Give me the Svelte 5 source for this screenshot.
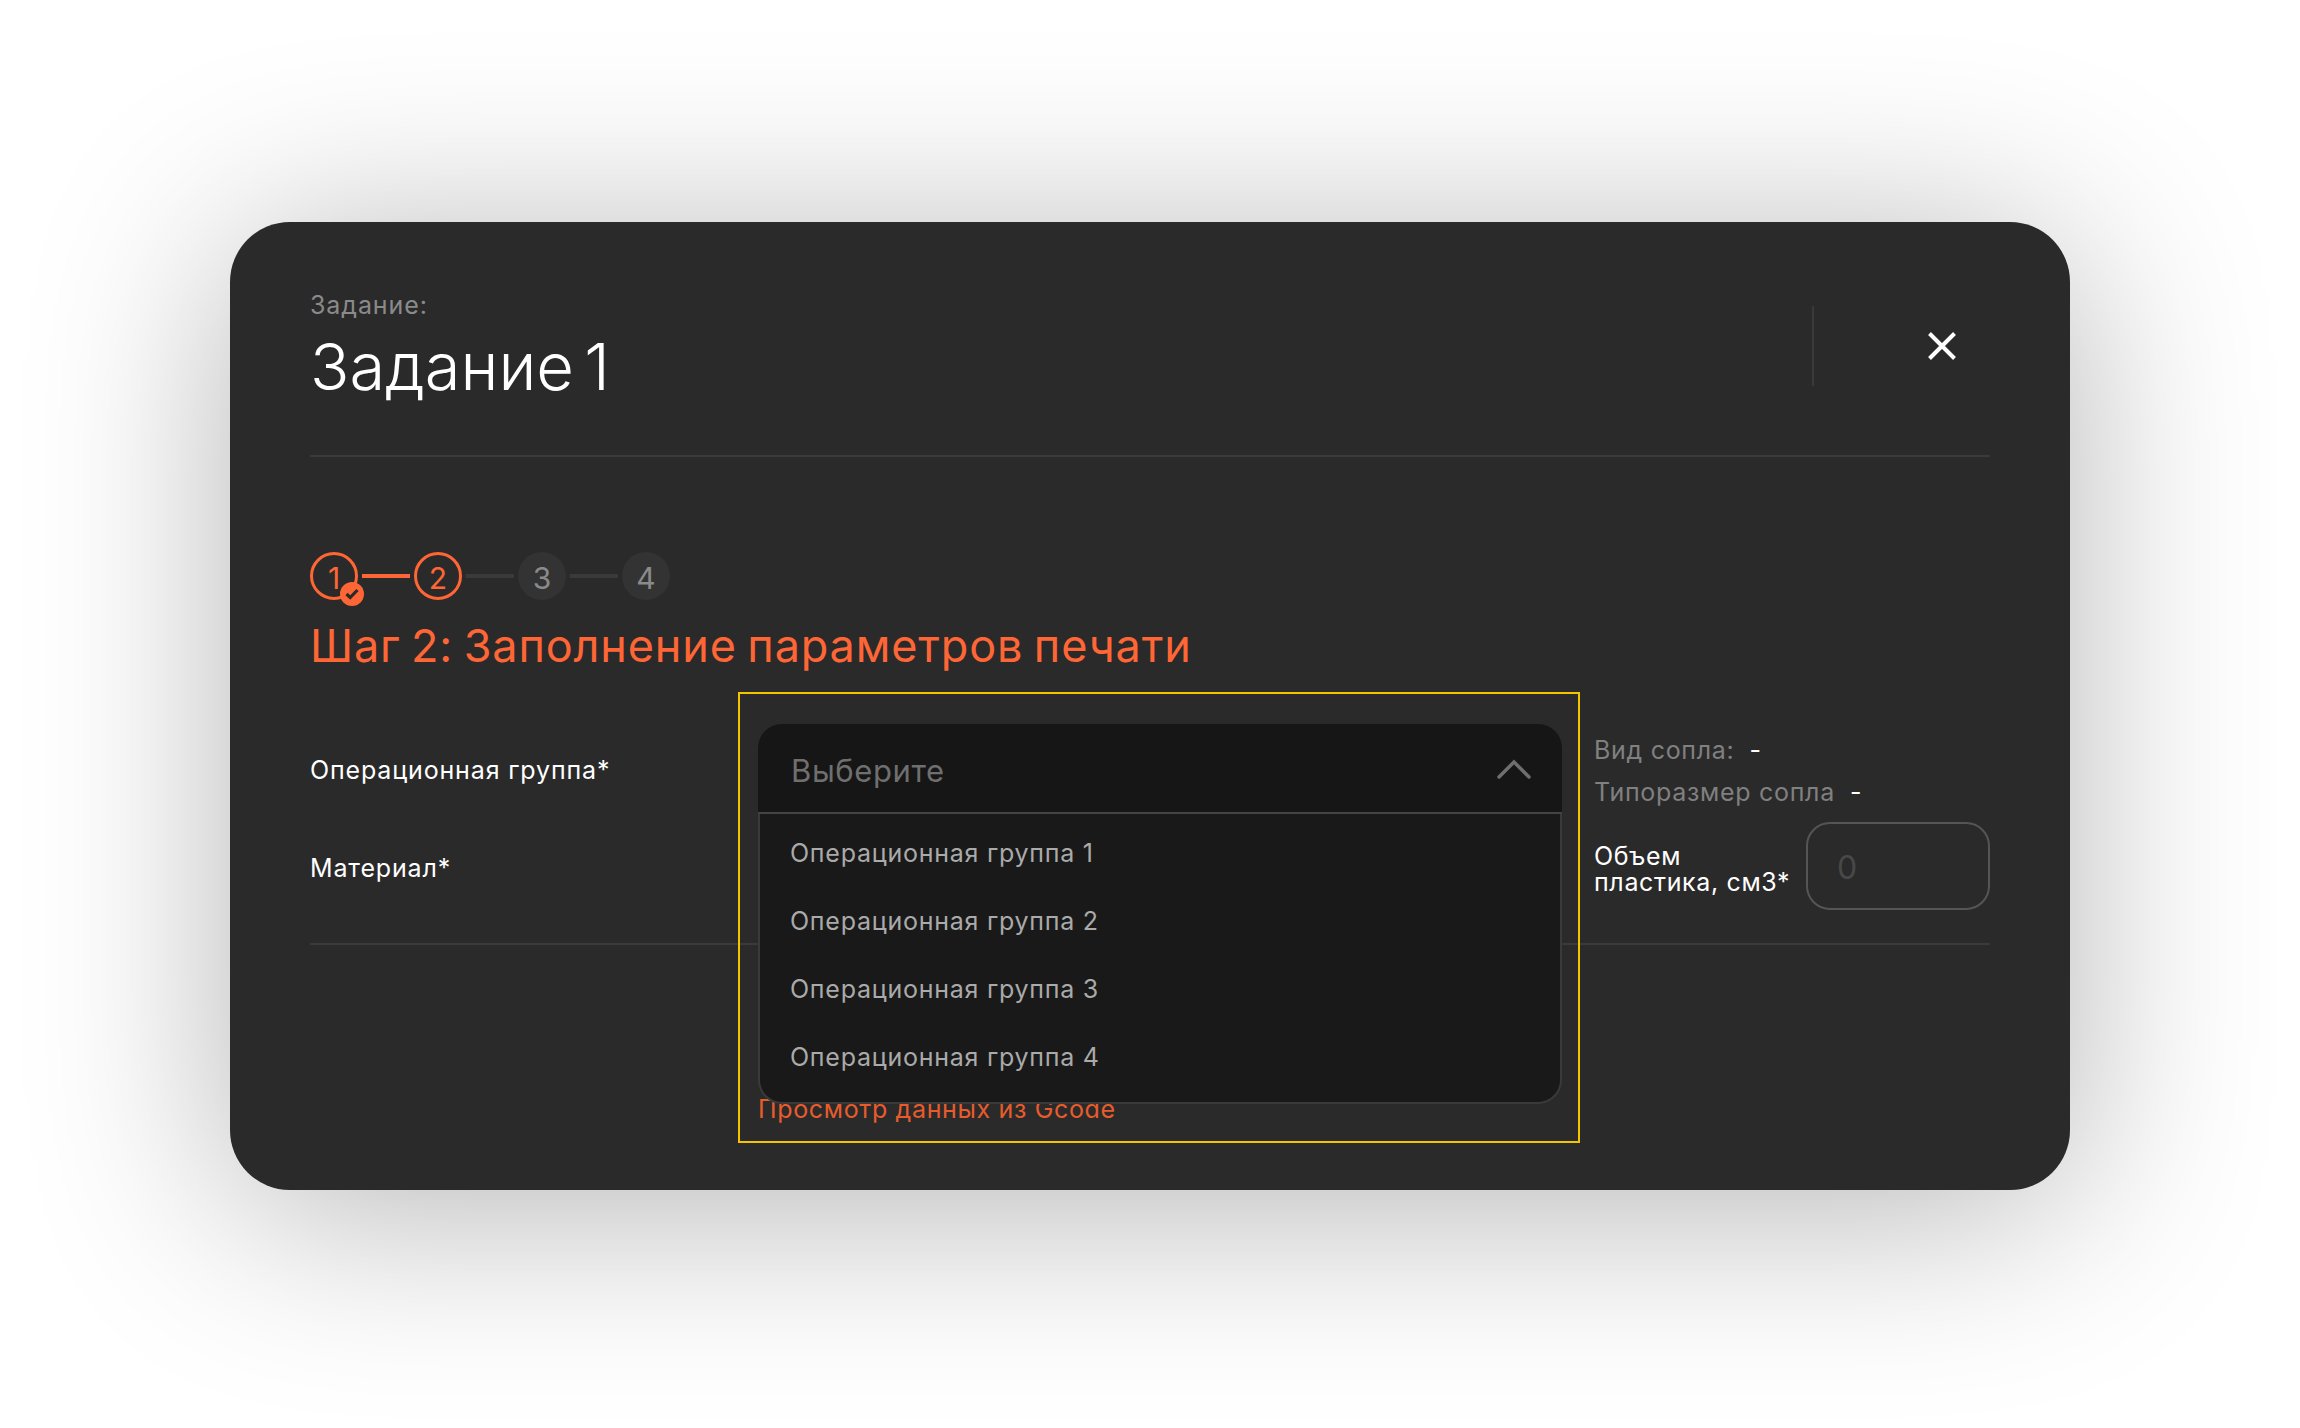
<script>
  const steps = [
    { n: 1, state: 'done' },
    { n: 2, state: 'active' },
    { n: 3, state: 'idle' },
    { n: 4, state: 'idle' }
  ];
  const groups = ['Операционная группа 1', 'Операционная группа 2', 'Операционная группа 3', 'Операционная группа 4'];
</script>

<div class="page">
  <section class="card">
    <header class="head">
      <div class="title-block">
        <div class="eyebrow">Задание:</div>
        <h1>Задание 1</h1>
      </div>
      <div class="close-wrap">
        <svg class="close" width="28" height="28" viewBox="0 0 28 28" aria-label="Закрыть">
          <path d="M1.5 1.5 26.5 26.5M26.5 1.5 1.5 26.5" fill="none" stroke="#fff" stroke-width="4" />
        </svg>
      </div>
    </header>

    <div class="stepper">
      {#each steps as s, i}
        {#if i > 0}
          <span class="link" class:on={s.state !== 'idle'}></span>
        {/if}
        <span class="step {s.state}">
          {s.n}
          {#if s.state === 'done'}
            <span class="badge">
              <svg width="14" height="12" viewBox="0 0 14 12">
                <path d="M1.5 6 5.2 9.5 12.5 2" fill="none" stroke="#2a2a2a" stroke-width="3.2" />
              </svg>
            </span>
          {/if}
        </span>
      {/each}
    </div>

    <h2>Шаг 2: Заполнение параметров печати</h2>

    <div class="form">
      <div class="labels">
        <div class="label">Операционная группа*</div>
        <div class="label">Материал*</div>
      </div>

      <div class="center">
        <div class="frame"></div>
        <div class="select">
          <div class="select-head">
            <span class="placeholder">Выберите</span>
            <svg width="34" height="20" viewBox="0 0 34 20">
              <path d="M2 18 17 3 32 18" fill="none" stroke="#6f6f6f" stroke-width="3.4" stroke-linecap="round" />
            </svg>
          </div>
          <ul class="options">
            {#each groups as g}
              <li>{g}</li>
            {/each}
          </ul>
        </div>
      </div>

      <div class="side">
        <div class="meta"><span class="key">Вид сопла:</span><span class="val">-</span></div>
        <div class="meta"><span class="key">Типоразмер сопла</span><span class="val">-</span></div>
        <div class="volume">
          <div class="vol-label">Объем<br />пластика, см3*</div>
          <div class="vol-input">0</div>
        </div>
      </div>
    </div>

    <div class="foot">
      <span class="gcode">Просмотр данных из Gcode</span>
    </div>
  </section>
</div>

<style>
  :global(body) {
    margin: 0;
    background: #fff;
  }
  .page {
    width: 2300px;
    height: 1428px;
    padding: 222px 230px 0;
    box-sizing: border-box;
    font-family: Inter, 'Noto Sans', sans-serif;
    overflow: hidden;
  }
  .card {
    height: 968px;
    box-sizing: border-box;
    padding: 0 80px;
    background: #2a2a2a;
    border-radius: 60px;
    box-shadow: 0 20px 200px rgba(0, 0, 0, 0.3);
    color: #fff;
  }
  .head {
    height: 235px;
    box-sizing: border-box;
    border-bottom: 2px solid #3a3a3a;
    display: flex;
    justify-content: space-between;
  }
  .title-block {
    padding-top: 69px;
  }
  .eyebrow {
    font-size: 25px;
    line-height: 29px;
    color: #8a8a8a;
    letter-spacing: 0.9px;
  }
  h1 {
    margin: 10px 0 0;
    font-size: 65px;
    line-height: 74px;
    font-weight: 300;
    word-spacing: -8px;
  }
  .close-wrap {
    width: 178px;
    height: 80px;
    margin-top: 84px;
    border-left: 2px solid #3a3a3a;
    box-sizing: border-box;
    padding: 26px 0 0 114px;
  }
  .close {
    display: block;
  }
  .stepper {
    display: flex;
    align-items: center;
    gap: 4px;
    margin-top: 95px;
    height: 48px;
  }
  .step {
    position: relative;
    width: 48px;
    height: 48px;
    box-sizing: border-box;
    border-radius: 50%;
    display: flex;
    align-items: center;
    justify-content: center;
    font-size: 30px;
    padding-top: 4px;
    color: #8a8a8a;
    background: #333;
  }
  .step.done,
  .step.active {
    background: transparent;
    border: 3px solid #ff6635;
    color: #ff6635;
  }
  .badge {
    position: absolute;
    left: 27px;
    top: 27px;
    width: 24px;
    height: 24px;
    border-radius: 50%;
    background: #ff6635;
    display: flex;
    align-items: center;
    justify-content: center;
  }
  .link {
    width: 48px;
    height: 4px;
    background: #3a3a3a;
  }
  .link.on {
    background: #ff6635;
  }
  h2 {
    margin: 19px 0 0;
    font-size: 45px;
    line-height: 53px;
    font-weight: 400;
    letter-spacing: 0.85px;
    word-spacing: -3px;
    color: #ff6635;
  }
  .form {
    display: grid;
    grid-template-columns: 448px 804px 1fr;
    height: 221px;
    box-sizing: border-box;
    margin-top: 52px;
    border-bottom: 2px solid #3a3a3a;
  }
  .labels {
    padding-top: 32px;
  }
  .label {
    font-size: 25px;
    line-height: 29px;
    letter-spacing: 0.85px;
    height: 98px;
  }
  .center {
    position: relative;
  }
  .frame {
    position: absolute;
    left: -20px;
    top: -32px;
    width: 842px;
    height: 451px;
    box-sizing: border-box;
    border: 2px solid #f5c400;
    pointer-events: none;
  }
  .select {
    position: absolute;
    left: 0;
    top: 0;
    width: 804px;
    z-index: 2;
  }
  .select-head {
    height: 90px;
    box-sizing: border-box;
    background: #161616;
    border-radius: 24px 24px 0 0;
    border-bottom: 2px solid #444;
    padding: 1px 31px 0 33px;
    display: flex;
    align-items: center;
    justify-content: space-between;
    font-size: 31px;
    letter-spacing: 0.6px;
    color: #6f6f6f;
  }
  .placeholder {
    padding-top: 3px;
  }
  .options {
    list-style: none;
    margin: 0;
    padding: 5px 0 0 30px;
    height: 290px;
    box-sizing: border-box;
    background: #191919;
    border: 2px solid #3a3a3a;
    border-top: 0;
    border-radius: 0 0 24px 24px;
  }
  .options li {
    height: 68px;
    line-height: 68px;
    font-size: 25px;
    letter-spacing: 0.75px;
    color: #aaa;
  }
  .side {
    padding-left: 32px;
    padding-top: 5px;
  }
  .meta {
    display: flex;
    gap: 15px;
    height: 42px;
    line-height: 42px;
    font-size: 25px;
    letter-spacing: 0.7px;
    color: #808080;
  }
  .val {
    color: #fff;
  }
  .volume {
    display: flex;
    align-items: center;
    gap: 17px;
    margin-top: 9px;
  }
  .vol-label {
    font-size: 25px;
    line-height: 26px;
    letter-spacing: 0.65px;
    white-space: nowrap;
    width: 195px;
    padding-top: 6px;
    flex: none;
  }
  .vol-input {
    width: 184px;
    height: 88px;
    flex: none;
    box-sizing: border-box;
    border: 2px solid #555;
    border-radius: 24px;
    padding-left: 29px;
    line-height: 88px;
    font-size: 32px;
    color: #484848;
  }
  .foot {
    padding-left: 448px;
    padding-top: 150px;
  }
  .gcode {
    font-size: 25px;
    line-height: 29px;
    letter-spacing: 0.65px;
    color: #e85c2c;
    display: block;
  }
</style>
